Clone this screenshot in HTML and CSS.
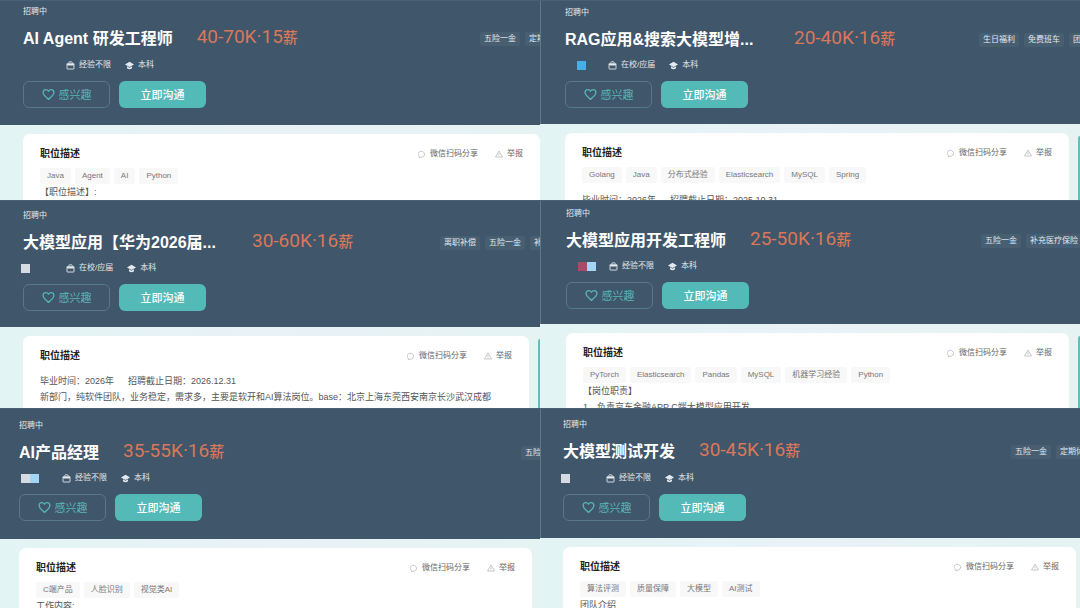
FILE: index.html
```html
<!DOCTYPE html>
<html lang="zh-CN">
<head>
	<meta charset="utf-8">
	<meta name="viewport" content="width=device-width, initial-scale=1">
	<title>招聘中</title>
	<link rel="stylesheet" href="styles.css">
</head>
<body>
	<!-- shared icons -->
	<svg class="sprite" aria-hidden="true">
		<symbol id="icon-case" viewBox="0 0 16 16">
			<path d="M5 4V2.5Q5 1.5 6 1.5h4q1 0 1 1V4" fill="none" stroke="currentColor" stroke-width="1.6"/>
			<path d="M1 5.5Q1 4 2.500 4h11Q15 4 15 5.500V8H1z" fill="currentColor"/>
			<path d="M1.800 8v5.500q0 .8.8.8h10.800q.8 0 .8-.8V8" fill="none" stroke="currentColor" stroke-width="1.600"/>
		</symbol>
		<symbol id="icon-cap" viewBox="0 0 16 16">
			<path d="M8 1.500 16 6l-8 4.500L0 6z" fill="currentColor"/>
			<path d="M3.500 9.500V13q4.500 3 9 0V9.500L8 12z" fill="currentColor"/>
		</symbol>
		<symbol id="icon-heart" viewBox="0 0 24 24">
			<path d="M12 21C7 17 2 13 2 8.500 2 5.200 4.300 3 7.200 3 9.300 3 11 4.200 12 6c1-1.800 2.700-3 4.800-3C19.700 3 22 5.200 22 8.500 22 13 17 17 12 21z" fill="none" stroke="currentColor" stroke-width="2.400" stroke-linejoin="round"/>
		</symbol>
		<symbol id="icon-share" viewBox="0 0 16 16">
			<path d="M3 13.500A6.500 6 0 1 1 6 14.500L2.500 15z" fill="none" stroke="currentColor" stroke-width="1.300"/>
		</symbol>
		<symbol id="icon-warn" viewBox="0 0 16 16">
			<path d="M8 2 15 14H1zM8 6.500v4M8 11.500v1" fill="none" stroke="currentColor" stroke-width="1.300" stroke-linejoin="round"/>
		</symbol>
	</svg>

	<main class="board">
		<article class="job job-agent">
			<header class="hero">
				<div class="status">招聘中</div>
				<div class="title-row">
					<h2 class="title">AI Agent 研发工程师</h2>
					<span class="salary">40-70K·15<small>薪</small></span>
					<div class="perks"><span>五险一金</span><span>定期</span></div>
				</div>
				<div class="meta">
					<span class="place"></span>
					<span class="fact"><svg><use href="#icon-case"/></svg>经验不限</span>
					<span class="fact"><svg><use href="#icon-cap"/></svg>本科</span>
				</div>
				<div class="actions">
					<button class="btn btn-like" type="button"><svg><use href="#icon-heart"/></svg>感兴趣</button>
					<button class="btn btn-chat" type="button">立即沟通</button>
				</div>
			</header>
			<div class="body">
				<section class="card">
					<div class="card-head">
						<h3>职位描述</h3>
						<a href="#"><svg><use href="#icon-share"/></svg>微信扫码分享</a>
						<a href="#"><svg><use href="#icon-warn"/></svg>举报</a>
					</div>
					<div class="tags"><span>Java</span><span>Agent</span><span>AI</span><span>Python</span></div>
					<p>【职位描述】:</p>
				</section>
			</div>
		</article>

		<article class="job job-rag">
			<header class="hero">
				<div class="status">招聘中</div>
				<div class="title-row">
					<h2 class="title title-cut">RAG应用&amp;搜索大模型增...</h2>
					<span class="salary">20-40K·16<small>薪</small></span>
					<div class="perks"><span>生日福利</span><span>免费班车</span><span>团建</span></div>
				</div>
				<div class="meta">
					<span class="place place-in"><i class="block blue"></i></span>
					<span class="fact"><svg><use href="#icon-case"/></svg>在校/应届</span>
					<span class="fact"><svg><use href="#icon-cap"/></svg>本科</span>
				</div>
				<div class="actions">
					<button class="btn btn-like" type="button"><svg><use href="#icon-heart"/></svg>感兴趣</button>
					<button class="btn btn-chat" type="button">立即沟通</button>
				</div>
			</header>
			<div class="body">
				<section class="card">
					<div class="card-head">
						<h3>职位描述</h3>
						<a href="#"><svg><use href="#icon-share"/></svg>微信扫码分享</a>
						<a href="#"><svg><use href="#icon-warn"/></svg>举报</a>
					</div>
					<div class="tags"><span>Golang</span><span>Java</span><span>分布式经验</span><span>Elasticsearch</span><span>MySQL</span><span>Spring</span></div>
					<p class="dates"><span>毕业时间：2026年</span><span>招聘截止日期：2025.10.31</span></p>
				</section>
				<div class="side"></div>
			</div>
		</article>

		<article class="job job-huawei">
			<header class="hero">
				<div class="status">招聘中</div>
				<div class="title-row">
					<h2 class="title title-cut">大模型应用【华为2026届...</h2>
					<span class="salary">30-60K·16<small>薪</small></span>
					<div class="perks"><span>离职补偿</span><span>五险一金</span><span>补充</span></div>
				</div>
				<div class="meta">
					<span class="place place-out"><i class="block grey"></i></span>
					<span class="fact"><svg><use href="#icon-case"/></svg>在校/应届</span>
					<span class="fact"><svg><use href="#icon-cap"/></svg>本科</span>
				</div>
				<div class="actions">
					<button class="btn btn-like" type="button"><svg><use href="#icon-heart"/></svg>感兴趣</button>
					<button class="btn btn-chat" type="button">立即沟通</button>
				</div>
			</header>
			<div class="body">
				<section class="card">
					<div class="card-head">
						<h3>职位描述</h3>
						<a href="#"><svg><use href="#icon-share"/></svg>微信扫码分享</a>
						<a href="#"><svg><use href="#icon-warn"/></svg>举报</a>
					</div>
					<p class="dates"><span>毕业时间：2026年</span><span>招聘截止日期：2026.12.31</span></p>
					<p>新部门，纯软件团队，业务稳定，需求多，主要是软开和AI算法岗位。base：北京上海东莞西安南京长沙武汉成都</p>
				</section>
				<div class="side"></div>
			</div>
		</article>

		<article class="job job-dev">
			<header class="hero">
				<div class="status">招聘中</div>
				<div class="title-row">
					<h2 class="title">大模型应用开发工程师</h2>
					<span class="salary">25-50K·16<small>薪</small></span>
					<div class="perks"><span>五险一金</span><span>补充医疗保险</span></div>
				</div>
				<div class="meta">
					<span class="place place-in"><i class="block red"></i><i class="block sky"></i></span>
					<span class="fact"><svg><use href="#icon-case"/></svg>经验不限</span>
					<span class="fact"><svg><use href="#icon-cap"/></svg>本科</span>
				</div>
				<div class="actions">
					<button class="btn btn-like" type="button"><svg><use href="#icon-heart"/></svg>感兴趣</button>
					<button class="btn btn-chat" type="button">立即沟通</button>
				</div>
			</header>
			<div class="body">
				<section class="card">
					<div class="card-head">
						<h3>职位描述</h3>
						<a href="#"><svg><use href="#icon-share"/></svg>微信扫码分享</a>
						<a href="#"><svg><use href="#icon-warn"/></svg>举报</a>
					</div>
					<div class="tags"><span>PyTorch</span><span>Elasticsearch</span><span>Pandas</span><span>MySQL</span><span>机器学习经验</span><span>Python</span></div>
					<p>【岗位职责】</p>
					<p>1、负责京东金融APP C端大模型应用开发</p>
				</section>
				<div class="side"></div>
			</div>
		</article>

		<article class="job job-pm">
			<header class="hero">
				<div class="status">招聘中</div>
				<div class="title-row">
					<h2 class="title">AI产品经理</h2>
					<span class="salary">35-55K·16<small>薪</small></span>
					<div class="perks"><span>五险一金</span></div>
				</div>
				<div class="meta">
					<span class="place"><i class="block grey"></i><i class="block sky"></i></span>
					<span class="fact"><svg><use href="#icon-case"/></svg>经验不限</span>
					<span class="fact"><svg><use href="#icon-cap"/></svg>本科</span>
				</div>
				<div class="actions">
					<button class="btn btn-like" type="button"><svg><use href="#icon-heart"/></svg>感兴趣</button>
					<button class="btn btn-chat" type="button">立即沟通</button>
				</div>
			</header>
			<div class="body">
				<section class="card">
					<div class="card-head">
						<h3>职位描述</h3>
						<a href="#"><svg><use href="#icon-share"/></svg>微信扫码分享</a>
						<a href="#"><svg><use href="#icon-warn"/></svg>举报</a>
					</div>
					<div class="tags"><span>C端产品</span><span>人脸识别</span><span>视觉类AI</span></div>
					<p>工作内容:</p>
				</section>
			</div>
		</article>

		<article class="job job-test">
			<header class="hero">
				<div class="status">招聘中</div>
				<div class="title-row">
					<h2 class="title">大模型测试开发</h2>
					<span class="salary">30-45K·16<small>薪</small></span>
					<div class="perks"><span>五险一金</span><span>定期体检</span></div>
				</div>
				<div class="meta">
					<span class="place place-out"><i class="block grey"></i></span>
					<span class="fact"><svg><use href="#icon-case"/></svg>经验不限</span>
					<span class="fact"><svg><use href="#icon-cap"/></svg>本科</span>
				</div>
				<div class="actions">
					<button class="btn btn-like" type="button"><svg><use href="#icon-heart"/></svg>感兴趣</button>
					<button class="btn btn-chat" type="button">立即沟通</button>
				</div>
			</header>
			<div class="body">
				<section class="card">
					<div class="card-head">
						<h3>职位描述</h3>
						<a href="#"><svg><use href="#icon-share"/></svg>微信扫码分享</a>
						<a href="#"><svg><use href="#icon-warn"/></svg>举报</a>
					</div>
					<div class="tags"><span>算法评测</span><span>质量保障</span><span>大模型</span><span>AI测试</span></div>
					<p>团队介绍</p>
				</section>
			</div>
		</article>
	</main>
</body>
</html>
```

FILE: styles.css
```css
* {
	box-sizing: border-box;
}
body {
	margin: 0;
	font-family: "Liberation Sans", "Noto Sans CJK SC", sans-serif;
	font-size: 8px;
	line-height: 12px;
	color: #555;
}
h2, h3, p {
	margin: 0;
}
.sprite {
	display: none;
}
.board {
	display: grid;
	grid-template-columns: repeat(2, minmax(0, 1fr));
	grid-template-rows: minmax(0, 25fr) minmax(0, 26fr) minmax(0, 25fr);
	height: 100vh;
	overflow: hidden;
}

/* one posting */
.job {
	display: flex;
	flex-direction: column;
	overflow: hidden;
	white-space: nowrap;
	background: linear-gradient(90deg, #e3f4f4, #e9f2f7 50%, #e5f3f3);
}
.hero {
	padding: var(--top) 0 var(--bottom) var(--left);
	background: #40566a;
	border-top: 1px solid #4b6173;
	color: #e3e9ee;
}
.job:nth-child(even) .hero {
	box-shadow: inset 1px 0 #61788a;
}
.job-agent {
	--top: 5px;
	--left: 23px;
	--row: 7px;
	--bottom: 17px;
	--perks: 60px;
	--edge: 0px;
}
.job-rag {
	--top: 6px;
	--left: 25px;
	--row: 6px;
	--bottom: 16px;
	--perks: 101px;
	--edge: 0px;
}
.job-huawei {
	--top: 9px;
	--left: 23px;
	--row: 6px;
	--bottom: 16px;
	--perks: 100px;
	--edge: 0px;
}
.job-dev {
	--top: 7px;
	--left: 26px;
	--row: 6px;
	--bottom: 15px;
	--perks: 99px;
	--edge: 0px;
}
.job-pm {
	--top: 11px;
	--left: 19px;
	--row: 6px;
	--bottom: 18px;
	--perks: 19px;
	--edge: 8px;
}
.job-test {
	--top: 10px;
	--left: 23px;
	--row: 7px;
	--bottom: 17px;
	--perks: 69px;
	--edge: 4px;
}

.title-row {
	display: flex;
	align-items: center;
	height: 26px;
	margin-top: 8px;
}
.title {
	font-size: 16px;
	line-height: 26px;
	color: #fff;
}
.title-cut {
	min-width: 205px;
}
.salary {
	margin-left: 24px;
	padding-bottom: 4px;
	font-family: Roboto, "Noto Sans CJK SC", sans-serif;
	font-size: 19px;
	line-height: 22px;
	color: #d9775a;
}
.salary small {
	font-size: 15px;
	font-weight: 500;
}
.perks {
	display: flex;
	flex: 0 0 var(--perks);
	gap: 5px;
	margin-left: auto;
	overflow: hidden;
}
.perks span {
	flex: none;
	padding: 1px 4px;
	border-radius: 2px;
	background: #485e71;
}

.meta {
	display: flex;
	height: 12px;
	margin-top: var(--row);
}
.place {
	display: flex;
	align-items: center;
	width: 43px;
	padding-left: 2px;
}
.place-in {
	padding-left: 12px;
}
.place-out {
	width: 45px;
	margin-left: -2px;
	padding-left: 0;
}
.block {
	width: 9px;
	height: 9px;
}
.blue {
	background: #45b0e6;
}
.grey {
	background: #d5dae3;
}
.red {
	background: #a34d66;
}
.sky {
	background: #a3d6f5;
}
.fact {
	display: flex;
	align-items: center;
	gap: 4px;
	margin-right: 14px;
}
.fact svg {
	width: 9px;
	height: 9px;
}

.actions {
	display: flex;
	gap: 9px;
	margin-top: 10px;
}
.btn {
	display: flex;
	align-items: center;
	justify-content: center;
	gap: 4px;
	width: 87px;
	height: 27px;
	padding: 0;
	border: 0;
	border-radius: 6px;
	font: 11px/16px "Liberation Sans", "Noto Sans CJK SC", sans-serif;
}
.btn-like {
	border: 1px solid #58788a;
	background: none;
	color: #57b4b5;
}
.btn-like svg {
	width: 13px;
	height: 13px;
}
.btn-chat {
	background: #54bab8;
	color: #fff;
	font-weight: 500;
}

.body {
	display: flex;
	flex: 1;
	gap: 9px;
	min-height: 0;
	padding: 9px var(--edge) 0 var(--left);
}
.card {
	flex: 1;
	min-width: 0;
	padding: 12px 17px 0;
	border-radius: 7px 7px 0 0;
	background: #fff;
}
.side {
	width: 2px;
	margin-top: 3px;
	border-radius: 2px 0 0 0;
	background: #63bdb8;
}
.card-head {
	display: flex;
	align-items: center;
	gap: 17px;
	height: 16px;
}
.card-head h3 {
	margin-right: auto;
	font-size: 10px;
	color: #222;
}
.card-head a {
	display: flex;
	align-items: center;
	gap: 4px;
	color: #666;
	text-decoration: none;
}
.card-head svg {
	width: 8px;
	height: 8px;
	color: #aaa;
}
.tags {
	display: flex;
	gap: 4px;
	margin-top: 6px;
}
.tags span {
	padding: 2px 7px;
	border-radius: 2px;
	background: #f8f8f8;
	color: #777;
}
.card p {
	font-size: 9px;
	line-height: 16px;
}
.card .dates {
	display: flex;
	gap: 14px;
	margin-top: 9px;
}
```
